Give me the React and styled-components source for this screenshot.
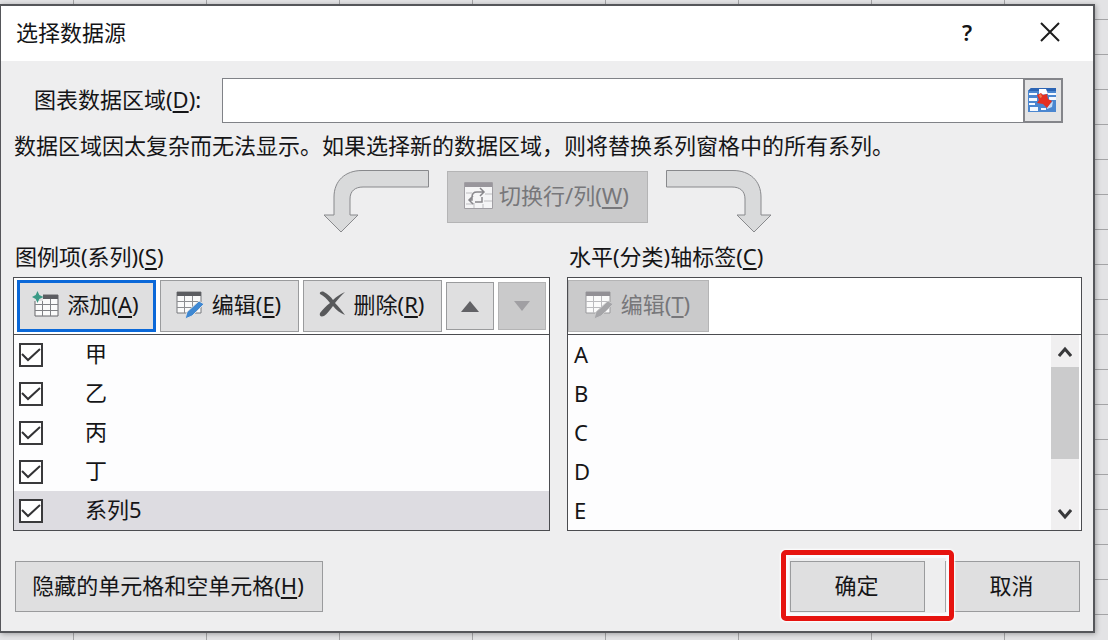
import React, { useState } from 'react';
import styled, { createGlobalStyle, css } from 'styled-components';

const GlobalStyle = createGlobalStyle`
  * {
    box-sizing: border-box;
  }

  body {
    margin: 0;
    color: #151517;
    font-family: 'Noto Sans', 'Noto Sans CJK SC', sans-serif;
    font-size: 22px;
    line-height: 32px;
  }

  button, input {
    font: inherit;
    color: inherit;
  }

  u {
    text-decoration-thickness: 2px;
    text-underline-offset: 3px;
  }
`;

const Sheet = styled.main`
  display: flex;
  min-height: 100vh;
  padding: 4px 13px 7px 0;
  background-color: #e3e3e5;
  background-image: repeating-linear-gradient(
      to right,
      transparent 0 73px,
      #a4a4a6 73px 74px,
      transparent 74px 133px
    ),
    repeating-linear-gradient(
      to bottom,
      transparent 0 19px,
      #a4a4a6 19px 20px,
      transparent 20px 35px
    );
`;

const Dialog = styled.section`
  display: flex;
  flex-direction: column;
  flex: 1;
  min-width: 0;
  border: 2px solid #55565a;
  border-left-width: 1px;
  background: #eeeeef;
  box-shadow: 1px 1px 5px rgba(0, 0, 0, 0.3);
`;

const TitleBar = styled.header`
  display: flex;
  align-items: center;
  height: 55px;
  padding: 0 25px 4px 15px;
  background: #fff;
`;

const Title = styled.h1`
  flex: 1;
  margin: 0;
  font-size: 22px;
  font-weight: 400;
`;

const TitleButton = styled.button`
  display: flex;
  align-items: center;
  justify-content: center;
  width: 36px;
  height: 40px;
  margin-left: 47px;
  padding: 0;
  border: 0;
  background: none;
  font-weight: 600;
`;

const Body = styled.div`
  padding: 17px 11px 0 12px;
`;

const RangeRow = styled.div`
  display: flex;
  align-items: center;
  padding: 0 19px 0 21px;
`;

const RangeLabel = styled.label`
  width: 188px;
  padding-bottom: 4px;
`;

const RangeInput = styled.input`
  flex: 1;
  min-width: 0;
  height: 45px;
  padding: 0 8px;
  border: 1px solid #808287;
  border-right: 0;
  background: #fff;
  outline: none;
`;

const RangeButton = styled.button`
  display: flex;
  align-items: center;
  justify-content: center;
  width: 40px;
  height: 45px;
  padding: 0 2px 2px 0;
  border: 2px solid #84858a;
  background: #e4e4e5;
`;

const Message = styled.p`
  margin: 6px 0 8px 1px;
  white-space: nowrap;
`;

const SwitchRow = styled.div`
  display: flex;
  justify-content: center;
  gap: 18px;
  height: 64px;
`;

const buttonBase = css`
  display: flex;
  align-items: center;
  justify-content: center;
  padding: 0 2px 4px 0;
  border: 1px solid #9a9b9d;
  background: #dfdfe0;
  white-space: nowrap;

  &:disabled {
    border-color: #b4b4b5;
    background: #cacacb;
    color: #77777a;
  }
`;

const SwitchButton = styled.button`
  ${buttonBase}
  gap: 6px;
  width: 201px;
  height: 52px;
  margin-top: 2px;
`;

const Panels = styled.div`
  display: grid;
  grid-template-columns: 537fr 515fr;
  gap: 17px;
  margin-top: 7px;
`;

const PanelTitle = styled.h2`
  margin: 0 0 5px 2px;
  font-size: 22px;
  font-weight: 400;
`;

const PanelBox = styled.div`
  border: 1px solid #4b4c50;
  background: #fdfdfe;
`;

const Toolbar = styled.div`
  display: flex;
  align-items: center;
  gap: 4px;
  height: 57px;
  padding-left: ${(props) => (props.$flush ? '0' : '3px')};
  border-bottom: 1px solid #4b4c50;
  background: #fff;
`;

const ToolButton = styled.button`
  ${buttonBase}
  gap: 8px;
  width: ${(props) => (props.$wide ? '141px' : '139px')};
  height: 52px;

  ${(props) =>
    props.$focused &&
    css`
      border: 3px solid #0a68d8;
    `}
`;

const MoveButton = styled.button`
  ${buttonBase}
  width: 48px;
  height: 48px;
  padding: 0;
`;

const SeriesList = styled.ul`
  margin: 0;
  padding: 0;
  list-style: none;
`;

const SeriesRow = styled.li`
  display: flex;
  align-items: center;
  height: 39px;
  padding-left: 5px;
  background: ${(props) => (props.$selected ? '#dddce1' : 'transparent')};
`;

const SeriesLabel = styled.label`
  padding: 0 0 4px 42px;
`;

const CheckWrap = styled.span`
  display: grid;

  input,
  svg {
    grid-area: 1 / 1;
  }

  svg {
    pointer-events: none;
  }
`;

const CheckInput = styled.input`
  appearance: none;
  width: 24px;
  height: 24px;
  margin: 0;
  border: 2px solid #3a3a3c;
  background: #fff;

  &:not(:checked) + svg {
    visibility: hidden;
  }
`;

const AxisArea = styled.div`
  display: flex;
  height: 195px;
  overflow: hidden;
`;

const AxisList = styled.ul`
  flex: 1;
  margin: 0;
  padding: 0 0 0 6px;
  list-style: none;

  li {
    height: 39px;
    line-height: 39px;
  }
`;

const ScrollTrack = styled.div`
  display: flex;
  flex-direction: column;
  width: 28px;
  margin-right: 2px;
  background: #f0eff0;
`;

const ScrollButton = styled.button`
  display: flex;
  align-items: center;
  justify-content: center;
  height: 32px;
  padding: 0;
  border: 0;
  background: none;
`;

const ScrollThumb = styled.div`
  height: 92px;
  margin-bottom: auto;
  background: #cbcbcc;
`;

const Footer = styled.footer`
  display: flex;
  gap: 20px;
  padding: 30px 13px 19px 14px;
`;

const FooterButton = styled.button`
  ${buttonBase}
  width: ${(props) => (props.$wide ? '308px' : '135px')};
  height: 51px;
  margin-right: ${(props) => (props.$wide ? 'auto' : '0')};
`;

const ConfirmWrap = styled.div`
  position: relative;
  z-index: 1;
`;

const Highlight = styled.span`
  position: absolute;
  inset: -11px -29px -9px -9px;
  border: 5px solid #e6130f;
  border-radius: 5px;
  box-shadow: 0 0 2px 1px #fff, inset 0 0 1px 3px #fafafc;
  pointer-events: none;
`;

const CloseIcon = () => (
  <svg width="20" height="20" viewBox="0 0 20 20" fill="none">
    <path d="M1 1l18 18M19 1L1 19" stroke="#1c1c1c" strokeWidth="2" />
  </svg>
);

const RangeIcon = () => (
  <svg width="28" height="26" viewBox="0 0 28 26">
    <path d="M3 1h25v24H0V4z" fill="#4a86d0" />
    <path d="M0 4l3-3h25v3H0z" fill="#2b64b4" />
    <path
      d="M1 6h8v2H1zM1 11h8v3H1zM1 16h6v2H1zM2 20h8v4H2zM20 6h8v2h-8zM21 10h7v3h-7zM13 21h5v2h-5z"
      fill="#f4f8ff"
    />
    <path d="M11 2h7l2 5-9 1z" fill="#fff" />
    <path d="M19 20l6-6-1 6-5 2z" fill="#c3dbf6" />
    <path d="M9 8l4-2 2 2 4-1 1 5 4 2-5 7-4-4-6-1 2-3z" fill="#e43022" />
    <path d="M11 8l2-1 1 3-2 1z" fill="#f07a4a" />
  </svg>
);

const CurvedArrow = ({ flip }) => (
  <svg width="106" height="64" viewBox="0 0 106 64">
    <path
      d="M105.5 1.5H39C22 1.5 11 12 11 28v18H1l17 17 17-17H27V30c0-8 5-12 13-12h65.5z"
      transform={flip ? 'translate(106 0) scale(-1 1)' : undefined}
      fill="#d9dadb"
      stroke="#88898c"
    />
  </svg>
);

const SwitchIcon = () => (
  <svg width="29" height="27" viewBox="0 0 29 27" fill="none">
    <path d="M.5.5h28v26H.5z" fill="#f5f5f6" stroke="#a09ea3" />
    <path d="M1 1h27v4H1z" fill="#99969c" />
    <path d="M2 11h6M2 22h8M10 21v5M19 22v4M21 12h7M20 19h8" stroke="#bdbdc0" />
    <path
      d="M5 18h3v-3q0-5 5-5h6M16 6l4 4-4 4M18 15v5h-7M9 14l-4 4 4 4"
      stroke="#88878b"
      strokeWidth="1.5"
    />
  </svg>
);

const AddIcon = () => (
  <svg width="27" height="26" viewBox="0 0 27 26" fill="none">
    <path d="M3 4h23v21H3z" fill="#fafafa" stroke="#66676b" />
    <path d="M11 4h15v4H11z" fill="#5c5d61" />
    <path d="M3 13.5h23M3 19.5h23M10.5 8v17M18.5 8v17" stroke="#808185" />
    <path d="M0 0h11v10H0z" fill="#dfdfe0" />
    <path d="M5.5 0l1.800 4 4.200 2-4.200 2-1.800 4-1.800-4L0 6l3.700-2z" fill="#3a9a86" />
  </svg>
);

const EditIcon = ({ muted }) => (
  <svg width="28" height="29" viewBox="0 0 28 29" fill="none">
    <path d="M1 2h24v21H1z" fill="#fafafa" stroke={muted ? '#99999c' : '#77787c'} />
    <path d="M1 2h24v4H1z" fill={muted ? '#929095' : '#5c5d61'} />
    <path
      d="M1 11.5h24M1 17.5h24M8.5 6v17M16.5 6v17"
      stroke={muted ? '#bbbbbe' : '#8d8e92'}
    />
    <path
      d="M23 11l5 3-12 12-7 3 2-7z"
      fill={muted ? '#a5a5a8' : '#3f88d2'}
      stroke={muted ? '#cacacb' : '#dfdfe0'}
    />
  </svg>
);

const DeleteIcon = () => (
  <svg width="27" height="26" viewBox="0 0 27 26">
    <path
      d="M1 3C0 1 3 0 5 1c4 2 7 5 9 8 3-3 7-6 12-8-4 4-7 7-10 11 4 4 7 8 10 12-5-2-9-5-12-9-3 4-6 8-9 10-3 1-5 0-4-3 3-4 6-7 10-10C8 8 5 5 1 3z"
      fill="#58595b"
    />
  </svg>
);

const Triangle = ({ down }) => (
  <svg width="18" height="11" viewBox="0 0 18 11">
    <path d={down ? 'M1 0h16l-8 10z' : 'M9 0l9 11H0z'} fill={down ? '#a09fa3' : '#626266'} />
  </svg>
);

const Chevron = ({ down }) => (
  <svg width="14" height="11" viewBox="0 0 14 11" fill="none">
    <path
      d={down ? 'M1 1l6 7 6-7' : 'M1 10l6-7 6 7'}
      stroke="#38383a"
      strokeWidth="3"
    />
  </svg>
);

const CheckMark = () => (
  <svg width="24" height="24" viewBox="0 0 24 24" fill="none">
    <path d="M3 11l6 6L21 6" stroke="#333335" strokeWidth="2" />
  </svg>
);

const initialSeries = ['甲', '乙', '丙', '丁', '系列5'];
const categories = ['A', 'B', 'C', 'D', 'E'];

const App = () => {
  const [range, setRange] = useState('');
  const [selected, setSelected] = useState(4);

  return (
    <>
      <GlobalStyle />
      <Sheet>
        <Dialog role="dialog" aria-labelledby="dialog-title">
          <TitleBar>
            <Title id="dialog-title">选择数据源</Title>
            <TitleButton type="button">?</TitleButton>
            <TitleButton type="button" aria-label="关闭">
              <CloseIcon />
            </TitleButton>
          </TitleBar>
          <Body>
            <RangeRow>
              <RangeLabel htmlFor="range">
                图表数据区域(<u>D</u>):
              </RangeLabel>
              <RangeInput
                id="range"
                type="text"
                value={range}
                onChange={(e) => setRange(e.target.value)}
              />
              <RangeButton type="button" aria-label="选择区域">
                <RangeIcon />
              </RangeButton>
            </RangeRow>
            <Message>
              数据区域因太复杂而无法显示。如果选择新的数据区域，则将替换系列窗格中的所有系列。
            </Message>
            <SwitchRow>
              <CurvedArrow />
              <SwitchButton type="button" disabled>
                <SwitchIcon />
                <span>
                  切换行/列(<u>W</u>)
                </span>
              </SwitchButton>
              <CurvedArrow flip />
            </SwitchRow>
            <Panels>
              <div>
                <PanelTitle>
                  图例项(系列)(<u>S</u>)
                </PanelTitle>
                <PanelBox>
                  <Toolbar>
                    <ToolButton type="button" $focused>
                      <AddIcon />
                      <span>
                        添加(<u>A</u>)
                      </span>
                    </ToolButton>
                    <ToolButton type="button">
                      <EditIcon />
                      <span>
                        编辑(<u>E</u>)
                      </span>
                    </ToolButton>
                    <ToolButton type="button">
                      <DeleteIcon />
                      <span>
                        删除(<u>R</u>)
                      </span>
                    </ToolButton>
                    <MoveButton type="button" aria-label="上移">
                      <Triangle />
                    </MoveButton>
                    <MoveButton type="button" aria-label="下移" disabled>
                      <Triangle down />
                    </MoveButton>
                  </Toolbar>
                  <SeriesList>
                    {initialSeries.map((name, i) => (
                      <SeriesRow
                        key={name}
                        $selected={i === selected}
                        onClick={() => setSelected(i)}
                      >
                        <CheckWrap>
                          <CheckInput type="checkbox" id={`series-${i}`} defaultChecked />
                          <CheckMark />
                        </CheckWrap>
                        <SeriesLabel htmlFor={`series-${i}`}>{name}</SeriesLabel>
                      </SeriesRow>
                    ))}
                  </SeriesList>
                </PanelBox>
              </div>
              <div>
                <PanelTitle>
                  水平(分类)轴标签(<u>C</u>)
                </PanelTitle>
                <PanelBox>
                  <Toolbar $flush>
                    <ToolButton type="button" $wide disabled>
                      <EditIcon muted />
                      <span>
                        编辑(<u>T</u>)
                      </span>
                    </ToolButton>
                  </Toolbar>
                  <AxisArea>
                    <AxisList>
                      {categories.map((name) => (
                        <li key={name}>{name}</li>
                      ))}
                    </AxisList>
                    <ScrollTrack>
                      <ScrollButton type="button" aria-label="向上滚动">
                        <Chevron />
                      </ScrollButton>
                      <ScrollThumb />
                      <ScrollButton type="button" aria-label="向下滚动">
                        <Chevron down />
                      </ScrollButton>
                    </ScrollTrack>
                  </AxisArea>
                </PanelBox>
              </div>
            </Panels>
          </Body>
          <Footer>
            <FooterButton type="button" $wide>
              <span>
                隐藏的单元格和空单元格(<u>H</u>)
              </span>
            </FooterButton>
            <ConfirmWrap>
              <FooterButton type="button">确定</FooterButton>
              <Highlight />
            </ConfirmWrap>
            <FooterButton type="button">取消</FooterButton>
          </Footer>
        </Dialog>
      </Sheet>
    </>
  );
};

export default App;
